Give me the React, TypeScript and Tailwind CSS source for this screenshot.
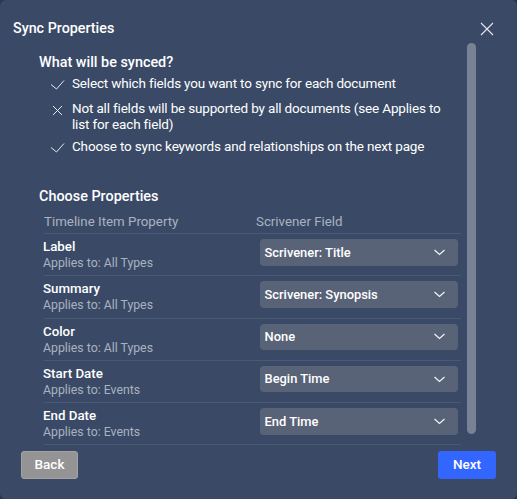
const FONT = "font-['Roboto',sans-serif]";

const bullets = [
  { icon: "check", text: "Select which fields you want to sync for each document" },
  { icon: "x", text: "Not all fields will be supported by all documents (see Applies to list for each field)" },
  { icon: "check", text: "Choose to sync keywords and relationships on the next page" },
];

const rows = [
  { name: "Label", applies: "Applies to: All Types", value: "Scrivener: Title" },
  { name: "Summary", applies: "Applies to: All Types", value: "Scrivener: Synopsis" },
  { name: "Color", applies: "Applies to: All Types", value: "None" },
  { name: "Start Date", applies: "Applies to: Events", value: "Begin Time" },
  { name: "End Date", applies: "Applies to: Events", value: "End Time" },
];

function CheckIcon() {
  return (
    <svg width="16" height="16" viewBox="0 0 16 16" fill="none" stroke="#e5e7eb" strokeWidth="1">
      <path d="M1 6.5 L6.5 11 L14 2.5" />
    </svg>
  );
}

function XIcon() {
  return (
    <svg width="16" height="16" viewBox="0 0 16 16" fill="none" stroke="#e5e7eb" strokeWidth="1">
      <path d="M3 3 L12 12 M12 3 L3 12" />
    </svg>
  );
}

export default function App() {
  return (
    <div className={`${FONT} h-[499px] w-[517px] bg-[#2b3648]`}>
      <div className="h-full w-full rounded-[6px] bg-[#3a4a66] flex flex-col text-white overflow-hidden">
        <div className="h-[42px] shrink-0 flex items-start justify-between pl-[13px] pr-[22px] pt-[19px]">
          <h1 className="text-[14.3px] leading-[18px] font-medium">Sync Properties</h1>
          <svg width="16" height="16" viewBox="0 0 16 16" fill="none" stroke="#e5e7eb" strokeWidth="1.1" className="mt-[2px]">
            <path d="M2 2 L14 14 M14 2 L2 14" />
          </svg>
        </div>
        <div className="flex-1 flex min-h-0">
          <div className="w-[428px] ml-[39px] flex flex-col">
            <h2 className="text-[14.4px] leading-[20px] font-medium mt-[11px]">What will be synced?</h2>
            <ul className="mt-[2px] pl-[11px] flex flex-col">
              {bullets.map((b) => (
                <li key={b.text} className="flex items-start gap-[6px] text-[13.5px] tracking-[-0.17px] leading-[16px] min-h-[25px] pb-[6px]">
                  <span className="w-[16px] shrink-0 pt-[3px]">{b.icon === "check" ? <CheckIcon /> : <XIcon />}</span>
                  <span className="w-[380px]">{b.text}</span>
                </li>
              ))}
            </ul>
            <h2 className="text-[14.4px] leading-[20px] font-medium mt-[24px]">Choose Properties</h2>
            <div className="ml-[5px] w-[417px] mt-[5px] flex text-[13.3px] leading-[18px] text-[#aab2c0] h-[22px] pt-[1px] border-b border-[#4a5a76]">
              <span className="w-[212px]">Timeline Item Property</span>
              <span>Scrivener Field</span>
            </div>
            {rows.map((r) => (
              <div key={r.name} className="ml-[5px] w-[417px] h-[42.25px] flex items-start justify-between pt-[5px] border-b border-[#4a5a76]">
                <div className="flex flex-col -ml-[1px]">
                  <span className="text-[13.3px] leading-[16px] font-medium">{r.name}</span>
                  <span className="text-[12.3px] leading-[16px] text-[#aab2c0]">{r.applies}</span>
                </div>
                <div className="w-[197.5px] h-[26.5px] mr-[3.5px] rounded-[4px] bg-[#596378] flex items-center justify-between pl-[4.5px] pr-[12.5px] text-[12.9px] font-medium">
                  <span>{r.value}</span>
                  <svg width="11" height="7" viewBox="0 0 11 7" fill="none" stroke="#f3f4f6" strokeWidth="1.2">
                    <path d="M0.5 1 L5.5 5.5 L10.5 1" />
                  </svg>
                </div>
              </div>
            ))}
          </div>
          <div className="w-[9px] mt-[1px] h-[391px] rounded-full bg-[#788294]" />
        </div>
        <div className="h-[48px] shrink-0 flex items-start justify-between pl-[21px] pr-[21px]">
          <button className="w-[57px] h-[28px] pb-[2px] rounded-[3px] bg-[#949494] border border-[#a3a3a3] text-[13.5px] font-medium">Back</button>
          <button className="w-[58px] h-[28px] pb-[2px] rounded-[3px] bg-[#3366ff] text-[13.5px] font-medium">Next</button>
        </div>
      </div>
    </div>
  );
}
